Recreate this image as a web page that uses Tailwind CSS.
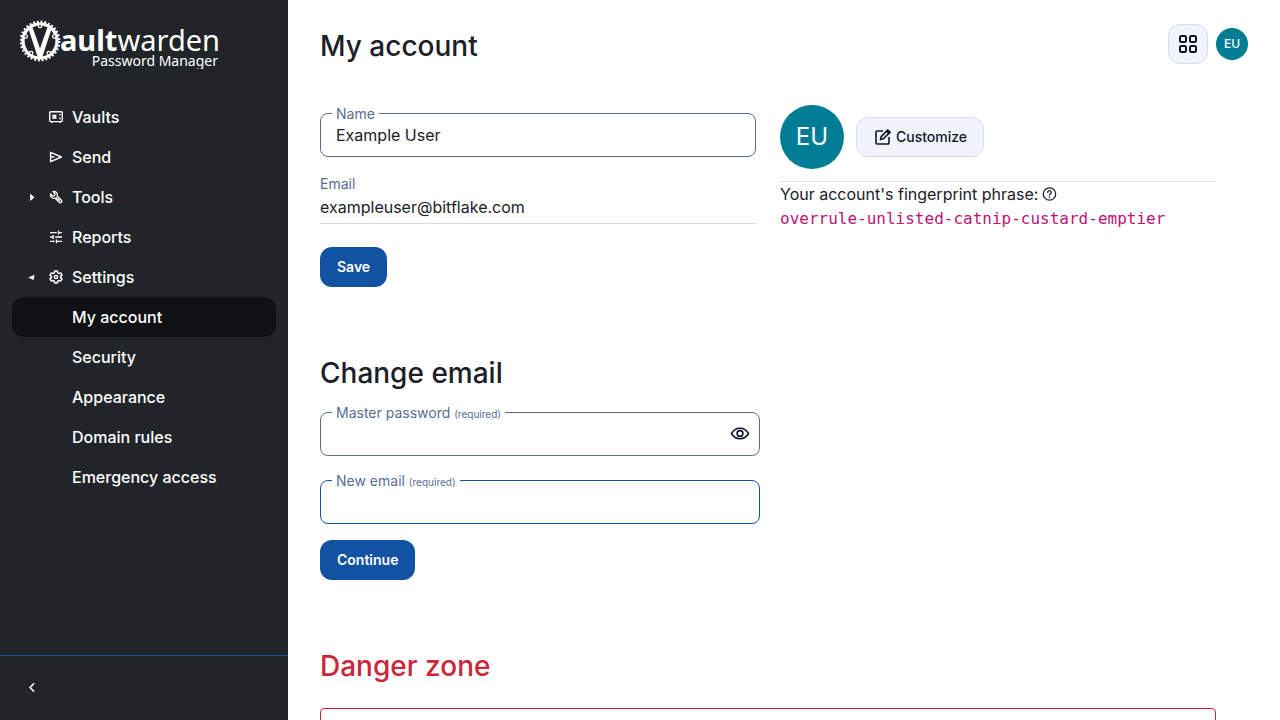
<!doctype html>
<html lang="en">
  <head>
    <meta charset="UTF-8" />
    <meta name="viewport" content="width=device-width, initial-scale=1.0" />
    <title>My account | Vaultwarden Web</title>
    <script src="https://cdn.jsdelivr.net/npm/@tailwindcss/browser@4"></script>
  </head>

  <body class="flex h-screen overflow-hidden bg-white font-['Inter',sans-serif] text-base text-[#1b2029]">
    <!-- Sidebar -->
    <nav class="flex w-72 shrink-0 flex-col bg-[#212529] text-white" aria-label="Password Manager">
      <a href="#" class="block px-5 pt-5 pb-7" aria-label="Vaultwarden Password Manager">
        <svg class="block h-[49px] w-[200px]" viewBox="0 0 200 49" fill="none" stroke="#fff">
          <circle cx="20" cy="21" r="17" stroke-width="3.2" />
          <circle cx="20" cy="21" r="19.2" stroke-width="2.4" stroke-dasharray="1.9 1.87" />
          <path d="M8.2 8h4.600L20 28.500 27.200 8h4.600L22 38h-4z" fill="#fff" stroke="none" />
          <g fill="#212529" stroke-width="1.3">
            <circle cx="20" cy="6" r="1.700" />
            <circle cx="34.300" cy="16.400" r="1.700" />
            <circle cx="28.800" cy="33.100" r="1.700" />
            <circle cx="11.200" cy="33.100" r="1.700" />
            <circle cx="5.700" cy="16.400" r="1.700" />
          </g>
          <text x="40" y="31" fill="#fff" stroke="none" font-family="Noto Sans, sans-serif" font-size="29"><tspan font-weight="700">ault</tspan><tspan>warden</tspan></text>
          <text x="198" y="46" fill="#fff" stroke="none" font-family="Noto Sans, sans-serif" font-size="14" text-anchor="end">Password Manager</text>
        </svg>
      </a>

      <ul class="flex-1 px-3 font-medium">
        <li>
          <a href="#" class="flex h-10 items-center gap-2 rounded-xl pl-9">
            <svg class="h-4 w-4" viewBox="0 0 16 16" fill="none" stroke="currentColor" stroke-width="1.4">
              <rect x="1.700" y="2.700" width="12.600" height="9.900" rx="1" />
              <path d="M4 12.500v1.500M12 12.500v1.500M12 5v1.600M12 8.600v1.600" />
              <circle cx="6.400" cy="7.700" r="1.500" />
              <path d="M4.300 5.600l4.200 4.200M8.500 5.600 4.300 9.800" stroke-width=".7" />
            </svg>
            Vaults
          </a>
        </li>
        <li>
          <a href="#" class="flex h-10 items-center gap-2 rounded-xl pl-9">
            <svg class="h-4 w-4" viewBox="0 0 16 16" fill="none" stroke="currentColor" stroke-width="1.4" stroke-linejoin="round">
              <path d="M2.600 3.300v9.400L13.400 8z" />
              <path d="M2.600 8H6.500" />
            </svg>
            Send
          </a>
        </li>
        <li>
          <a href="#" class="flex h-10 items-center gap-2 rounded-xl pl-4">
            <svg class="mr-1 h-2 w-2" viewBox="0 0 8 8" fill="currentColor"><path d="M2.200.6 6.400 4.400 2.200 8z" /></svg>
            <svg class="h-4 w-4" viewBox="0 0 16 16" fill="none" stroke="currentColor" stroke-width="1.3" stroke-linejoin="round">
              <path d="M5 2.500a3.300 3.300 0 0 1 4.100 4.400l4.300 4.200a1.500 1.500 0 0 1-2.200 2.200L7 9a3.300 3.300 0 0 1-4.400-4.100L4.700 7l1.900-.4.500-1.900z" />
              <path d="M8.300 8.200l3.800 3.800" />
            </svg>
            Tools
          </a>
        </li>
        <li>
          <a href="#" class="flex h-10 items-center gap-2 rounded-xl pl-9">
            <svg class="h-4 w-4" viewBox="0 0 16 16" fill="none" stroke="currentColor" stroke-width="1.3">
              <path d="M2 3.700h6.700M10.500 3.700H14M10.500 1.800v3.800M2 8h3.200M7.200 8H14M5.200 6.100v3.800M2 12.300h4.700M8.500 12.300H14M8.500 10.400v3.800" />
            </svg>
            Reports
          </a>
        </li>
        <li>
          <a href="#" class="flex h-10 items-center gap-2 rounded-xl pl-4">
            <svg class="mr-1 h-2 w-2" viewBox="0 0 8 8" fill="currentColor"><path d="M.2 4.400 6.700 1.800 5.600 7z" /></svg>
            <svg class="h-4 w-4" viewBox="0 0 16 16" fill="none" stroke="currentColor" stroke-width="1.500" stroke-linejoin="round">
              <path d="M6.700 1.900h2.600l.4 1.900 1.200.7 1.800-.6 1.300 2.200-1.400 1.300v1.200l1.400 1.300-1.300 2.200-1.800-.6-1.200.7-.4 1.900H6.700l-.4-1.900-1.200-.7-1.800.6L2 9.900l1.400-1.300V7.400L2 6.100l1.300-2.200 1.800.6 1.200-.7z" />
              <circle cx="8" cy="8" r="1.600" />
            </svg>
            Settings
          </a>
          <ul>
            <li><a href="#" class="flex h-10 items-center rounded-xl bg-[#101114] pl-15" aria-current="page">My account</a></li>
            <li><a href="#" class="flex h-10 items-center rounded-xl pl-15">Security</a></li>
            <li><a href="#" class="flex h-10 items-center rounded-xl pl-15">Appearance</a></li>
            <li><a href="#" class="flex h-10 items-center rounded-xl pl-15">Domain rules</a></li>
            <li><a href="#" class="flex h-10 items-center rounded-xl pl-15">Emergency access</a></li>
          </ul>
        </li>
      </ul>

      <div class="border-t border-[#1252a3] p-3">
        <button type="button" class="flex h-10 w-10 items-center justify-center" aria-label="Toggle side navigation">
          <svg class="h-4 w-4" viewBox="0 0 16 16" fill="none" stroke="currentColor" stroke-width="1.600" stroke-linecap="round" stroke-linejoin="round"><path d="M9.700 3.800 6 7.500l3.700 3.700" /></svg>
        </button>
      </div>
    </nav>

    <main class="min-w-0 flex-1 overflow-hidden px-8 pt-6">
      <header class="flex items-start justify-between">
        <h1 class="pt-1 text-[28px] leading-9 font-medium">My account</h1>
        <div class="flex items-center gap-2">
          <button type="button" class="flex h-10 w-10 items-center justify-center rounded-xl border border-[#d5dcea] bg-[#f1f4fa] text-[#0f172a]" aria-label="Switch products">
            <svg class="h-5 w-5" viewBox="0 0 20 20" fill="none" stroke="currentColor" stroke-width="2">
              <rect x="2" y="2" width="6" height="6" rx="1.500" />
              <rect x="12" y="2" width="6" height="6" rx="1.500" />
              <rect x="2" y="12" width="6" height="6" rx="1.500" />
              <rect x="12" y="12" width="6" height="6" rx="1.500" />
            </svg>
          </button>
          <button type="button" class="h-8 w-8 rounded-full bg-[#007c95] text-xs font-medium text-white">EU</button>
        </div>
      </header>

      <div class="pt-[41px] pr-8">
        <!-- Profile -->
        <form>
          <div class="grid grid-cols-2 gap-6">
            <div class="pt-2">
              <div class="relative">
                <input id="name" type="text" value="Example User" class="block h-11 w-full rounded-lg border border-[#5a6d91] bg-white px-[15px] outline-none" />
                <label for="name" class="absolute -top-[7px] left-3 bg-white px-1 text-sm leading-4 text-[#5a6d91]">Name</label>
              </div>
              <dl class="mt-4 border-b border-[#d5dcea] pt-px pb-1">
                <dt class="text-sm text-[#5a6d91]">Email</dt>
                <dd class="pt-px leading-6">exampleuser@bitflake.com</dd>
              </dl>
            </div>
            <div>
              <div class="flex items-center gap-3 border-b border-[#dee2e6] pb-3">
                <div class="flex h-16 w-16 items-center justify-center rounded-full bg-[#007c95] text-2xl text-white">EU</div>
                <button type="button" class="flex h-10 items-center gap-1 rounded-xl border border-[#d5dcea] bg-[#f1f4fa] pr-4 pl-[17px] text-sm font-medium text-[#0f172a]">
                  <svg class="h-[18px] w-[18px]" viewBox="0 0 18 18" fill="none" stroke="currentColor" stroke-width="1.600" stroke-linecap="round" stroke-linejoin="round">
                    <path d="M8.500 3H3.200A1.200 1.200 0 0 0 2 4.200v10.600A1.200 1.200 0 0 0 3.200 16h10.600a1.200 1.200 0 0 0 1.200-1.200V9.500" />
                    <path d="M6.500 11.500l.7-2.900 6.200-6.200 2.200 2.200-6.200 6.200z" />
                    <path d="M12.700 3.200l2.200 2.200 1.200-1.200-2.200-2.200z" fill="currentColor" />
                  </svg>
                  Customize
                </button>
              </div>
              <p class="flex items-center gap-1 leading-6">
                Your account's fingerprint phrase:
                <a href="#" aria-label="Learn about the account fingerprint">
                  <svg class="h-4 w-4" viewBox="0 0 16 16" fill="none" stroke="currentColor" stroke-width="1.300" stroke-linecap="round">
                    <circle cx="7.500" cy="8" r="6.200" />
                    <path d="M5.700 6.400a1.800 1.800 0 1 1 2.600 1.600c-.6.300-.8.600-.8 1.200" />
                    <path d="M7.500 11.300v.1" stroke-width="1.500" />
                  </svg>
                </a>
              </p>
              <code class="block pt-px font-['DejaVu_Sans_Mono',monospace] leading-6 text-[#c01176]">overrule-unlisted-catnip-custard-emptier</code>
            </div>
          </div>
          <button type="submit" class="mt-4 h-10 rounded-xl bg-[#1252a3] px-[17px] text-sm font-semibold text-white">Save</button>
        </form>

        <!-- Change email -->
        <section class="pt-17">
          <h2 class="text-[28px] leading-9 font-medium">Change email</h2>
          <form class="max-w-[440px] pt-[21px]">
            <div class="relative">
              <input id="password" type="password" class="block h-11 w-full rounded-lg border border-[#5a6d91] bg-white pr-11 pl-[15px] outline-none" />
              <label for="password" class="absolute -top-[7px] left-3 bg-white px-1 text-sm leading-4 text-[#5a6d91]">Master password <span class="text-[10px]">(required)</span></label>
              <button type="button" class="absolute top-3 right-[10px] text-[#0f172a]" aria-label="Toggle visibility">
                <svg class="h-5 w-5" viewBox="0 0 20 20" fill="none" stroke="currentColor" stroke-width="1.600">
                  <path d="M1.500 9.500C3.300 6.300 6.300 4.200 10 4.200s6.700 2.100 8.500 5.300c-1.800 3.200-4.800 5.300-8.500 5.300S3.300 12.700 1.500 9.500z" />
                  <circle cx="10" cy="9.500" r="2.900" />
                </svg>
              </button>
            </div>
            <div class="relative mt-6">
              <input id="new-email" type="email" class="block h-11 w-full rounded-lg border border-[#1252a3] bg-white px-[15px] outline-none" />
              <label for="new-email" class="absolute -top-[7px] left-3 bg-white px-1 text-sm leading-4 text-[#5a6d91]">New email <span class="text-[10px]">(required)</span></label>
            </div>
            <button type="submit" class="mt-4 h-10 rounded-xl bg-[#1252a3] px-[17px] text-sm font-semibold text-white">Continue</button>
          </form>
        </section>

        <!-- Danger zone -->
        <section class="pt-17">
          <h2 class="text-[28px] leading-9 font-medium text-[#cb263a]">Danger zone</h2>
          <div class="mt-6 h-20 rounded border border-[#cb263a]"></div>
        </section>
      </div>
    </main>
  </body>
</html>
